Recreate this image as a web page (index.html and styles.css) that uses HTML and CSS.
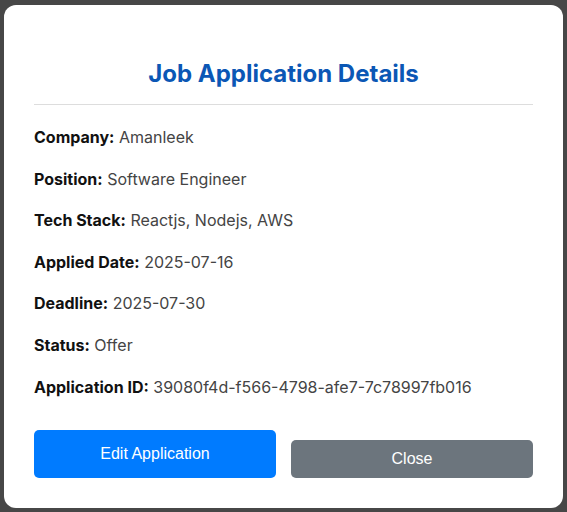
FILE: index.html
```html
<!DOCTYPE html>
<html lang="en">
<head>
<meta charset="utf-8">
<title>Job Application Details</title>
<link rel="stylesheet" href="styles.css">
</head>
<body>
<div class="overlay">
  <div class="modal">
    <h2 class="modal-title">Job Application Details</h2>
    <div class="details">
      <p class="row"><strong>Company:</strong> Amanleek</p>
      <p class="row"><strong>Position:</strong> Software Engineer</p>
      <p class="row"><strong>Tech Stack:</strong> Reactjs, Nodejs, AWS</p>
      <p class="row"><strong>Applied Date:</strong> 2025-07-16</p>
      <p class="row"><strong>Deadline:</strong> 2025-07-30</p>
      <p class="row"><strong>Status:</strong> Offer</p>
      <p class="row"><strong>Application ID:</strong> 39080f4d-f566-4798-afe7-7c78997fb016</p>
    </div>
    <div class="actions">
      <button class="btn btn-edit">Edit Application</button>
      <button class="btn btn-close">Close</button>
    </div>
  </div>
</div>
</body>
</html>
```

FILE: styles.css
```css
* { box-sizing: border-box; }
html, body { margin: 0; padding: 0; height: 100%; }
body {
  font-family: Inter, "Liberation Sans", sans-serif;
  background: #474747;
}
.overlay {
  height: 100%;
  display: flex;
  align-items: center;
  justify-content: center;
}
.modal {
  width: 559px;
  height: 503px;
  background: #fff;
  border-radius: 12px;
  padding: 30px 30px 30px;
  display: flex;
  flex-direction: column;
}
.modal-title {
  margin: 24px 0 0;
  padding-bottom: 16px;
  border-bottom: 1px solid #dddddd;
  text-align: center;
  font-size: 24px;
  line-height: 29px;
  font-weight: 700;
  color: #0b57b5;
}
.details { padding-top: 4.5px; }
.row {
  margin: 16px 0;
  font-size: 16px;
  line-height: 25.6px;
  color: #444;
}
.row strong { color: #111; font-weight: 700; }
.actions {
  margin-top: auto;
  display: flex;
  align-items: flex-end;
  gap: 15px;
}
.btn {
  flex: 1;
  border: none;
  border-radius: 5px;
  font-family: "Liberation Sans", Arial, sans-serif;
  font-size: 16px;
  line-height: 19.5px;
  color: #fff;
  cursor: pointer;
}
.btn-edit { background: #007bff; padding: 14px 10px; }
.btn-close { background: #6c757d; padding: 9px 10px; }
```
